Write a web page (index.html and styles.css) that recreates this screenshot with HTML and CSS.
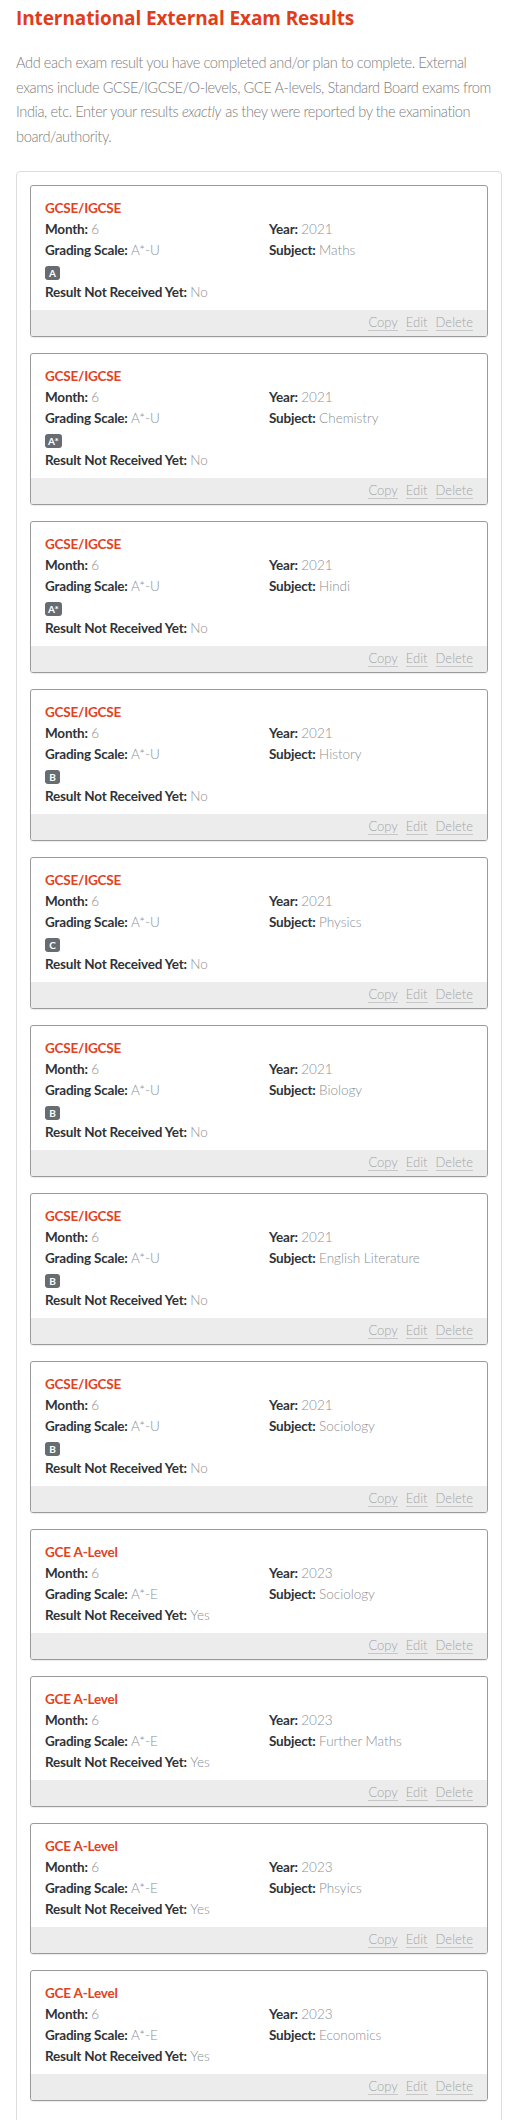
FILE: index.html
```html
<!DOCTYPE html>
<html lang="en">
<head>
<meta charset="utf-8">
<title>International External Exam Results</title>
<link rel="stylesheet" href="styles.css">
</head>
<body>
<h1 class="page-title">International External Exam Results</h1>
<p class="intro">Add each exam result you have completed and/or plan to complete. External exams include GCSE/IGCSE/O-levels, GCE A-levels, Standard Board exams from India, etc. Enter your results <em>exactly</em> as they were reported by the examination board/authority.</p>

<div class="results">
  <div class="card">
    <div class="card-body">
      <div class="card-title">GCSE/IGCSE</div>
      <div class="grid">
        <div class="field"><span class="label">Month:</span> <span class="value">6</span></div>
        <div class="field"><span class="label">Year:</span> <span class="value">2021</span></div>
        <div class="field"><span class="label">Grading Scale:</span> <span class="value">A*-U</span></div>
        <div class="field"><span class="label">Subject:</span> <span class="value">Maths</span></div>
      </div>
      <div class="badge-row"><span class="badge">A</span></div>
      <div class="field"><span class="label">Result Not Received Yet:</span> <span class="value">No</span></div>
    </div>
    <div class="card-footer"><a class="action">Copy</a><a class="action">Edit</a><a class="action">Delete</a></div>
  </div>

  <div class="card">
    <div class="card-body">
      <div class="card-title">GCSE/IGCSE</div>
      <div class="grid">
        <div class="field"><span class="label">Month:</span> <span class="value">6</span></div>
        <div class="field"><span class="label">Year:</span> <span class="value">2021</span></div>
        <div class="field"><span class="label">Grading Scale:</span> <span class="value">A*-U</span></div>
        <div class="field"><span class="label">Subject:</span> <span class="value">Chemistry</span></div>
      </div>
      <div class="badge-row"><span class="badge">A*</span></div>
      <div class="field"><span class="label">Result Not Received Yet:</span> <span class="value">No</span></div>
    </div>
    <div class="card-footer"><a class="action">Copy</a><a class="action">Edit</a><a class="action">Delete</a></div>
  </div>

  <div class="card">
    <div class="card-body">
      <div class="card-title">GCSE/IGCSE</div>
      <div class="grid">
        <div class="field"><span class="label">Month:</span> <span class="value">6</span></div>
        <div class="field"><span class="label">Year:</span> <span class="value">2021</span></div>
        <div class="field"><span class="label">Grading Scale:</span> <span class="value">A*-U</span></div>
        <div class="field"><span class="label">Subject:</span> <span class="value">Hindi</span></div>
      </div>
      <div class="badge-row"><span class="badge">A*</span></div>
      <div class="field"><span class="label">Result Not Received Yet:</span> <span class="value">No</span></div>
    </div>
    <div class="card-footer"><a class="action">Copy</a><a class="action">Edit</a><a class="action">Delete</a></div>
  </div>

  <div class="card">
    <div class="card-body">
      <div class="card-title">GCSE/IGCSE</div>
      <div class="grid">
        <div class="field"><span class="label">Month:</span> <span class="value">6</span></div>
        <div class="field"><span class="label">Year:</span> <span class="value">2021</span></div>
        <div class="field"><span class="label">Grading Scale:</span> <span class="value">A*-U</span></div>
        <div class="field"><span class="label">Subject:</span> <span class="value">History</span></div>
      </div>
      <div class="badge-row"><span class="badge">B</span></div>
      <div class="field"><span class="label">Result Not Received Yet:</span> <span class="value">No</span></div>
    </div>
    <div class="card-footer"><a class="action">Copy</a><a class="action">Edit</a><a class="action">Delete</a></div>
  </div>

  <div class="card">
    <div class="card-body">
      <div class="card-title">GCSE/IGCSE</div>
      <div class="grid">
        <div class="field"><span class="label">Month:</span> <span class="value">6</span></div>
        <div class="field"><span class="label">Year:</span> <span class="value">2021</span></div>
        <div class="field"><span class="label">Grading Scale:</span> <span class="value">A*-U</span></div>
        <div class="field"><span class="label">Subject:</span> <span class="value">Physics</span></div>
      </div>
      <div class="badge-row"><span class="badge">C</span></div>
      <div class="field"><span class="label">Result Not Received Yet:</span> <span class="value">No</span></div>
    </div>
    <div class="card-footer"><a class="action">Copy</a><a class="action">Edit</a><a class="action">Delete</a></div>
  </div>

  <div class="card">
    <div class="card-body">
      <div class="card-title">GCSE/IGCSE</div>
      <div class="grid">
        <div class="field"><span class="label">Month:</span> <span class="value">6</span></div>
        <div class="field"><span class="label">Year:</span> <span class="value">2021</span></div>
        <div class="field"><span class="label">Grading Scale:</span> <span class="value">A*-U</span></div>
        <div class="field"><span class="label">Subject:</span> <span class="value">Biology</span></div>
      </div>
      <div class="badge-row"><span class="badge">B</span></div>
      <div class="field"><span class="label">Result Not Received Yet:</span> <span class="value">No</span></div>
    </div>
    <div class="card-footer"><a class="action">Copy</a><a class="action">Edit</a><a class="action">Delete</a></div>
  </div>

  <div class="card">
    <div class="card-body">
      <div class="card-title">GCSE/IGCSE</div>
      <div class="grid">
        <div class="field"><span class="label">Month:</span> <span class="value">6</span></div>
        <div class="field"><span class="label">Year:</span> <span class="value">2021</span></div>
        <div class="field"><span class="label">Grading Scale:</span> <span class="value">A*-U</span></div>
        <div class="field"><span class="label">Subject:</span> <span class="value">English Literature</span></div>
      </div>
      <div class="badge-row"><span class="badge">B</span></div>
      <div class="field"><span class="label">Result Not Received Yet:</span> <span class="value">No</span></div>
    </div>
    <div class="card-footer"><a class="action">Copy</a><a class="action">Edit</a><a class="action">Delete</a></div>
  </div>

  <div class="card">
    <div class="card-body">
      <div class="card-title">GCSE/IGCSE</div>
      <div class="grid">
        <div class="field"><span class="label">Month:</span> <span class="value">6</span></div>
        <div class="field"><span class="label">Year:</span> <span class="value">2021</span></div>
        <div class="field"><span class="label">Grading Scale:</span> <span class="value">A*-U</span></div>
        <div class="field"><span class="label">Subject:</span> <span class="value">Sociology</span></div>
      </div>
      <div class="badge-row"><span class="badge">B</span></div>
      <div class="field"><span class="label">Result Not Received Yet:</span> <span class="value">No</span></div>
    </div>
    <div class="card-footer"><a class="action">Copy</a><a class="action">Edit</a><a class="action">Delete</a></div>
  </div>

  <div class="card">
    <div class="card-body">
      <div class="card-title">GCE A-Level</div>
      <div class="grid">
        <div class="field"><span class="label">Month:</span> <span class="value">6</span></div>
        <div class="field"><span class="label">Year:</span> <span class="value">2023</span></div>
        <div class="field"><span class="label">Grading Scale:</span> <span class="value">A*-E</span></div>
        <div class="field"><span class="label">Subject:</span> <span class="value">Sociology</span></div>
      </div>
      <div class="field"><span class="label">Result Not Received Yet:</span> <span class="value">Yes</span></div>
    </div>
    <div class="card-footer"><a class="action">Copy</a><a class="action">Edit</a><a class="action">Delete</a></div>
  </div>

  <div class="card">
    <div class="card-body">
      <div class="card-title">GCE A-Level</div>
      <div class="grid">
        <div class="field"><span class="label">Month:</span> <span class="value">6</span></div>
        <div class="field"><span class="label">Year:</span> <span class="value">2023</span></div>
        <div class="field"><span class="label">Grading Scale:</span> <span class="value">A*-E</span></div>
        <div class="field"><span class="label">Subject:</span> <span class="value">Further Maths</span></div>
      </div>
      <div class="field"><span class="label">Result Not Received Yet:</span> <span class="value">Yes</span></div>
    </div>
    <div class="card-footer"><a class="action">Copy</a><a class="action">Edit</a><a class="action">Delete</a></div>
  </div>

  <div class="card">
    <div class="card-body">
      <div class="card-title">GCE A-Level</div>
      <div class="grid">
        <div class="field"><span class="label">Month:</span> <span class="value">6</span></div>
        <div class="field"><span class="label">Year:</span> <span class="value">2023</span></div>
        <div class="field"><span class="label">Grading Scale:</span> <span class="value">A*-E</span></div>
        <div class="field"><span class="label">Subject:</span> <span class="value">Phsyics</span></div>
      </div>
      <div class="field"><span class="label">Result Not Received Yet:</span> <span class="value">Yes</span></div>
    </div>
    <div class="card-footer"><a class="action">Copy</a><a class="action">Edit</a><a class="action">Delete</a></div>
  </div>

  <div class="card">
    <div class="card-body">
      <div class="card-title">GCE A-Level</div>
      <div class="grid">
        <div class="field"><span class="label">Month:</span> <span class="value">6</span></div>
        <div class="field"><span class="label">Year:</span> <span class="value">2023</span></div>
        <div class="field"><span class="label">Grading Scale:</span> <span class="value">A*-E</span></div>
        <div class="field"><span class="label">Subject:</span> <span class="value">Economics</span></div>
      </div>
      <div class="field"><span class="label">Result Not Received Yet:</span> <span class="value">Yes</span></div>
    </div>
    <div class="card-footer"><a class="action">Copy</a><a class="action">Edit</a><a class="action">Delete</a></div>
  </div>
</div>
</body>
</html>
```

FILE: styles.css
```css
html, body {
  margin: 0;
  padding: 0;
  background: #ffffff;
}

body {
  padding: 0 16px;
  font-family: Lato, "Noto Sans", sans-serif;
  color: #333;
}

.page-title {
  margin: 0;
  padding-top: 6px;
  font-family: "Open Sans", "Noto Sans", sans-serif;
  font-weight: 700;
  font-size: 19px;
  line-height: 24px;
  color: #e03d1a;
  letter-spacing: -0.1px;
}

.intro {
  margin: 21px 0 0;
  font-size: 14.6px;
  line-height: 24.5px;
  font-weight: 300;
  letter-spacing: -0.4px;
  word-spacing: 0;
  color: #7d7d7d;
}

.intro em {
  font-style: italic;
  padding-right: 1px;
}

.results {
  margin-top: 22px;
  border: 1px solid #dddddd;
  border-radius: 4px;
  padding: 13px 13px 40px;
  display: flex;
  flex-direction: column;
  gap: 16px;
}

.card {
  border: 1px solid #9a9a9a;
  border-radius: 3px;
  overflow: hidden;
  box-shadow: 0 1px 1px rgba(0,0,0,0.08);
}

.card-body {
  padding: 12px 14px 7px;
}

.card-title {
  font-size: 13.5px;
  line-height: 21px;
  font-weight: 700;
  color: #e2421d;
  letter-spacing: -0.2px;
}

.grid {
  display: grid;
  grid-template-columns: 224px 1fr;
}

.field {
  font-size: 13.5px;
  line-height: 21px;
}

.label {
  font-weight: 700;
  color: #2f3338;
  letter-spacing: -0.2px;
}

.value {
  font-weight: 300;
  color: #8a8f94;
}

.badge-row {
  display: flex;
  padding: 5px 0 2px;
}

.badge {
  display: inline-flex;
  align-items: center;
  justify-content: center;
  height: 14px;
  min-width: 15px;
  padding: 0 3px;
  box-sizing: border-box;
  border-radius: 3px;
  background: #666c72;
  color: #fff;
  font-size: 10px;
  font-weight: 700;
  line-height: 14px;
}

.card-footer {
  height: 26px;
  background: #ececec;
  display: flex;
  justify-content: flex-end;
  align-items: center;
  gap: 8px;
  padding-right: 14px;
}

.action {
  font-size: 13px;
  line-height: 15px;
  font-weight: 300;
  color: #a5a5a5;
  border-bottom: 1px solid #c8c8c8;
  cursor: pointer;
}
```
